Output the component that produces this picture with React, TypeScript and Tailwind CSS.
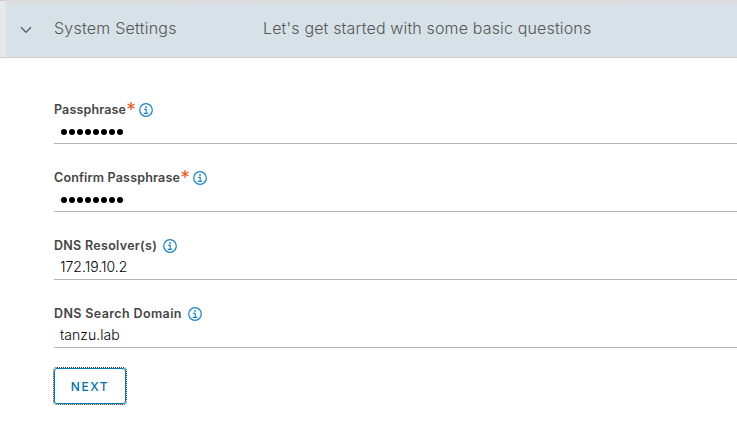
import React from 'react';

function InfoIcon() {
  return (
    <svg className="block h-[14px] w-[14px] shrink-0" viewBox="0 0 14 14" fill="none" stroke="#1684bb">
      <circle cx="7" cy="7" r="6.3" strokeWidth="1.2" />
      <path d="M5.2 6.4h2v4M4.8 10.4h4.4" strokeWidth="1.1" />
      <rect x="6.2" y="3.2" width="1.6" height="1.6" fill="#1684bb" stroke="none" />
    </svg>
  );
}

function Asterisk() {
  return (
    <svg className="-mt-[9px] ml-px h-[8px] w-[8px] shrink-0" viewBox="0 0 8 8" stroke="#e8571f" strokeWidth="1.3">
      <path d="M4 0v8M0.5 2l7 4M7.5 2l-7 4" />
    </svg>
  );
}

interface FieldProps {
  label: string;
  labelClass: string;
  required?: boolean;
  value?: string;
  valueClass?: string;
}

function Field({ label, labelClass, required, value, valueClass }: FieldProps) {
  return (
    <div className="flex h-[68px] flex-col">
      <div className="flex h-[20px] items-center">
        <label className={`whitespace-nowrap text-[12.5px] font-semibold leading-[18px] text-[#454545] ${labelClass}`}>
          {label}
        </label>
        {required && <Asterisk />}
        <span className={required ? 'ml-[4px]' : 'ml-[6px]'}>
          <InfoIcon />
        </span>
      </div>
      <div className="flex h-[24px] items-center border-b border-[#b3b3b3] pl-[6px]">
        {value ? (
          <span className={`whitespace-nowrap pb-[2px] text-[14px] font-[350] leading-[18px] text-black ${valueClass}`}>{value}</span>
        ) : (
          <span className="flex gap-[1.5px] pl-[0.5px] pt-px">
            {Array.from({ length: 8 }, (_, i) => (
              <span key={i} className="h-[6.5px] w-[6.5px] rounded-full bg-black" />
            ))}
          </span>
        )}
      </div>
    </div>
  );
}

export default function App() {
  return (
    <div className="h-[421px] w-full overflow-hidden bg-white font-['Inter',sans-serif]">
      <header className="flex h-[58px] border-b border-[#cacaca] bg-[#e8e8e8]">
        <div className="w-[6px] shrink-0 border-t border-[#cccccc]" />
        <div className="flex flex-1 items-center bg-[linear-gradient(to_bottom,#dcdcdc_0,#dcdcdc_3px,transparent_6px),linear-gradient(to_right,#d7e2e8_0,#d7e2e8_184px,#d8e0e9_188px,#d8e0e9_248px,#d7e2e8_252px,#d7e2e8_400px,#d8e0e9_731px)] pl-[14px] text-[16px] font-light text-[#565656]">
          <svg className="mt-[2px] h-[8px] w-[12px]" viewBox="0 0 12 8" fill="none" stroke="#5f6568" strokeWidth="1.5">
            <path d="M1 1.2l5 5 5-5" />
          </svg>
          <h2 className="ml-[22px] w-[209px] whitespace-nowrap pb-[2px]">
            <span className="tracking-[0.23px]">System Settings</span>
          </h2>
          <p className="whitespace-nowrap pb-[2px] tracking-[0.15px]">Let's get started with some basic questions</p>
        </div>
      </header>
      <main className="pl-[54px] pt-[42px]">
        <Field label="Passphrase" labelClass="w-[72px] tracking-[0.15px]" required />
        <Field label="Confirm Passphrase" labelClass="w-[126px] tracking-[0.18px]" required />
        <Field label="DNS Resolver(s)" labelClass="w-[103px] tracking-[0.3px]" value="172.19.10.2" valueClass="tracking-[0px]" />
        <Field label="DNS Search Domain" labelClass="w-[128px] tracking-[0.38px]" value="tanzu.lab" valueClass="tracking-[0.05px]" />
        <button className="-mt-[4px] flex h-[36px] w-[72px] items-center justify-center rounded-[3px] border border-[#0079b8] pt-[2px] text-[12px] font-medium tracking-[1.6px] text-[#0072a3] outline-1 outline-dotted outline-[#333333]">
          NEXT
        </button>
      </main>
    </div>
  );
}
